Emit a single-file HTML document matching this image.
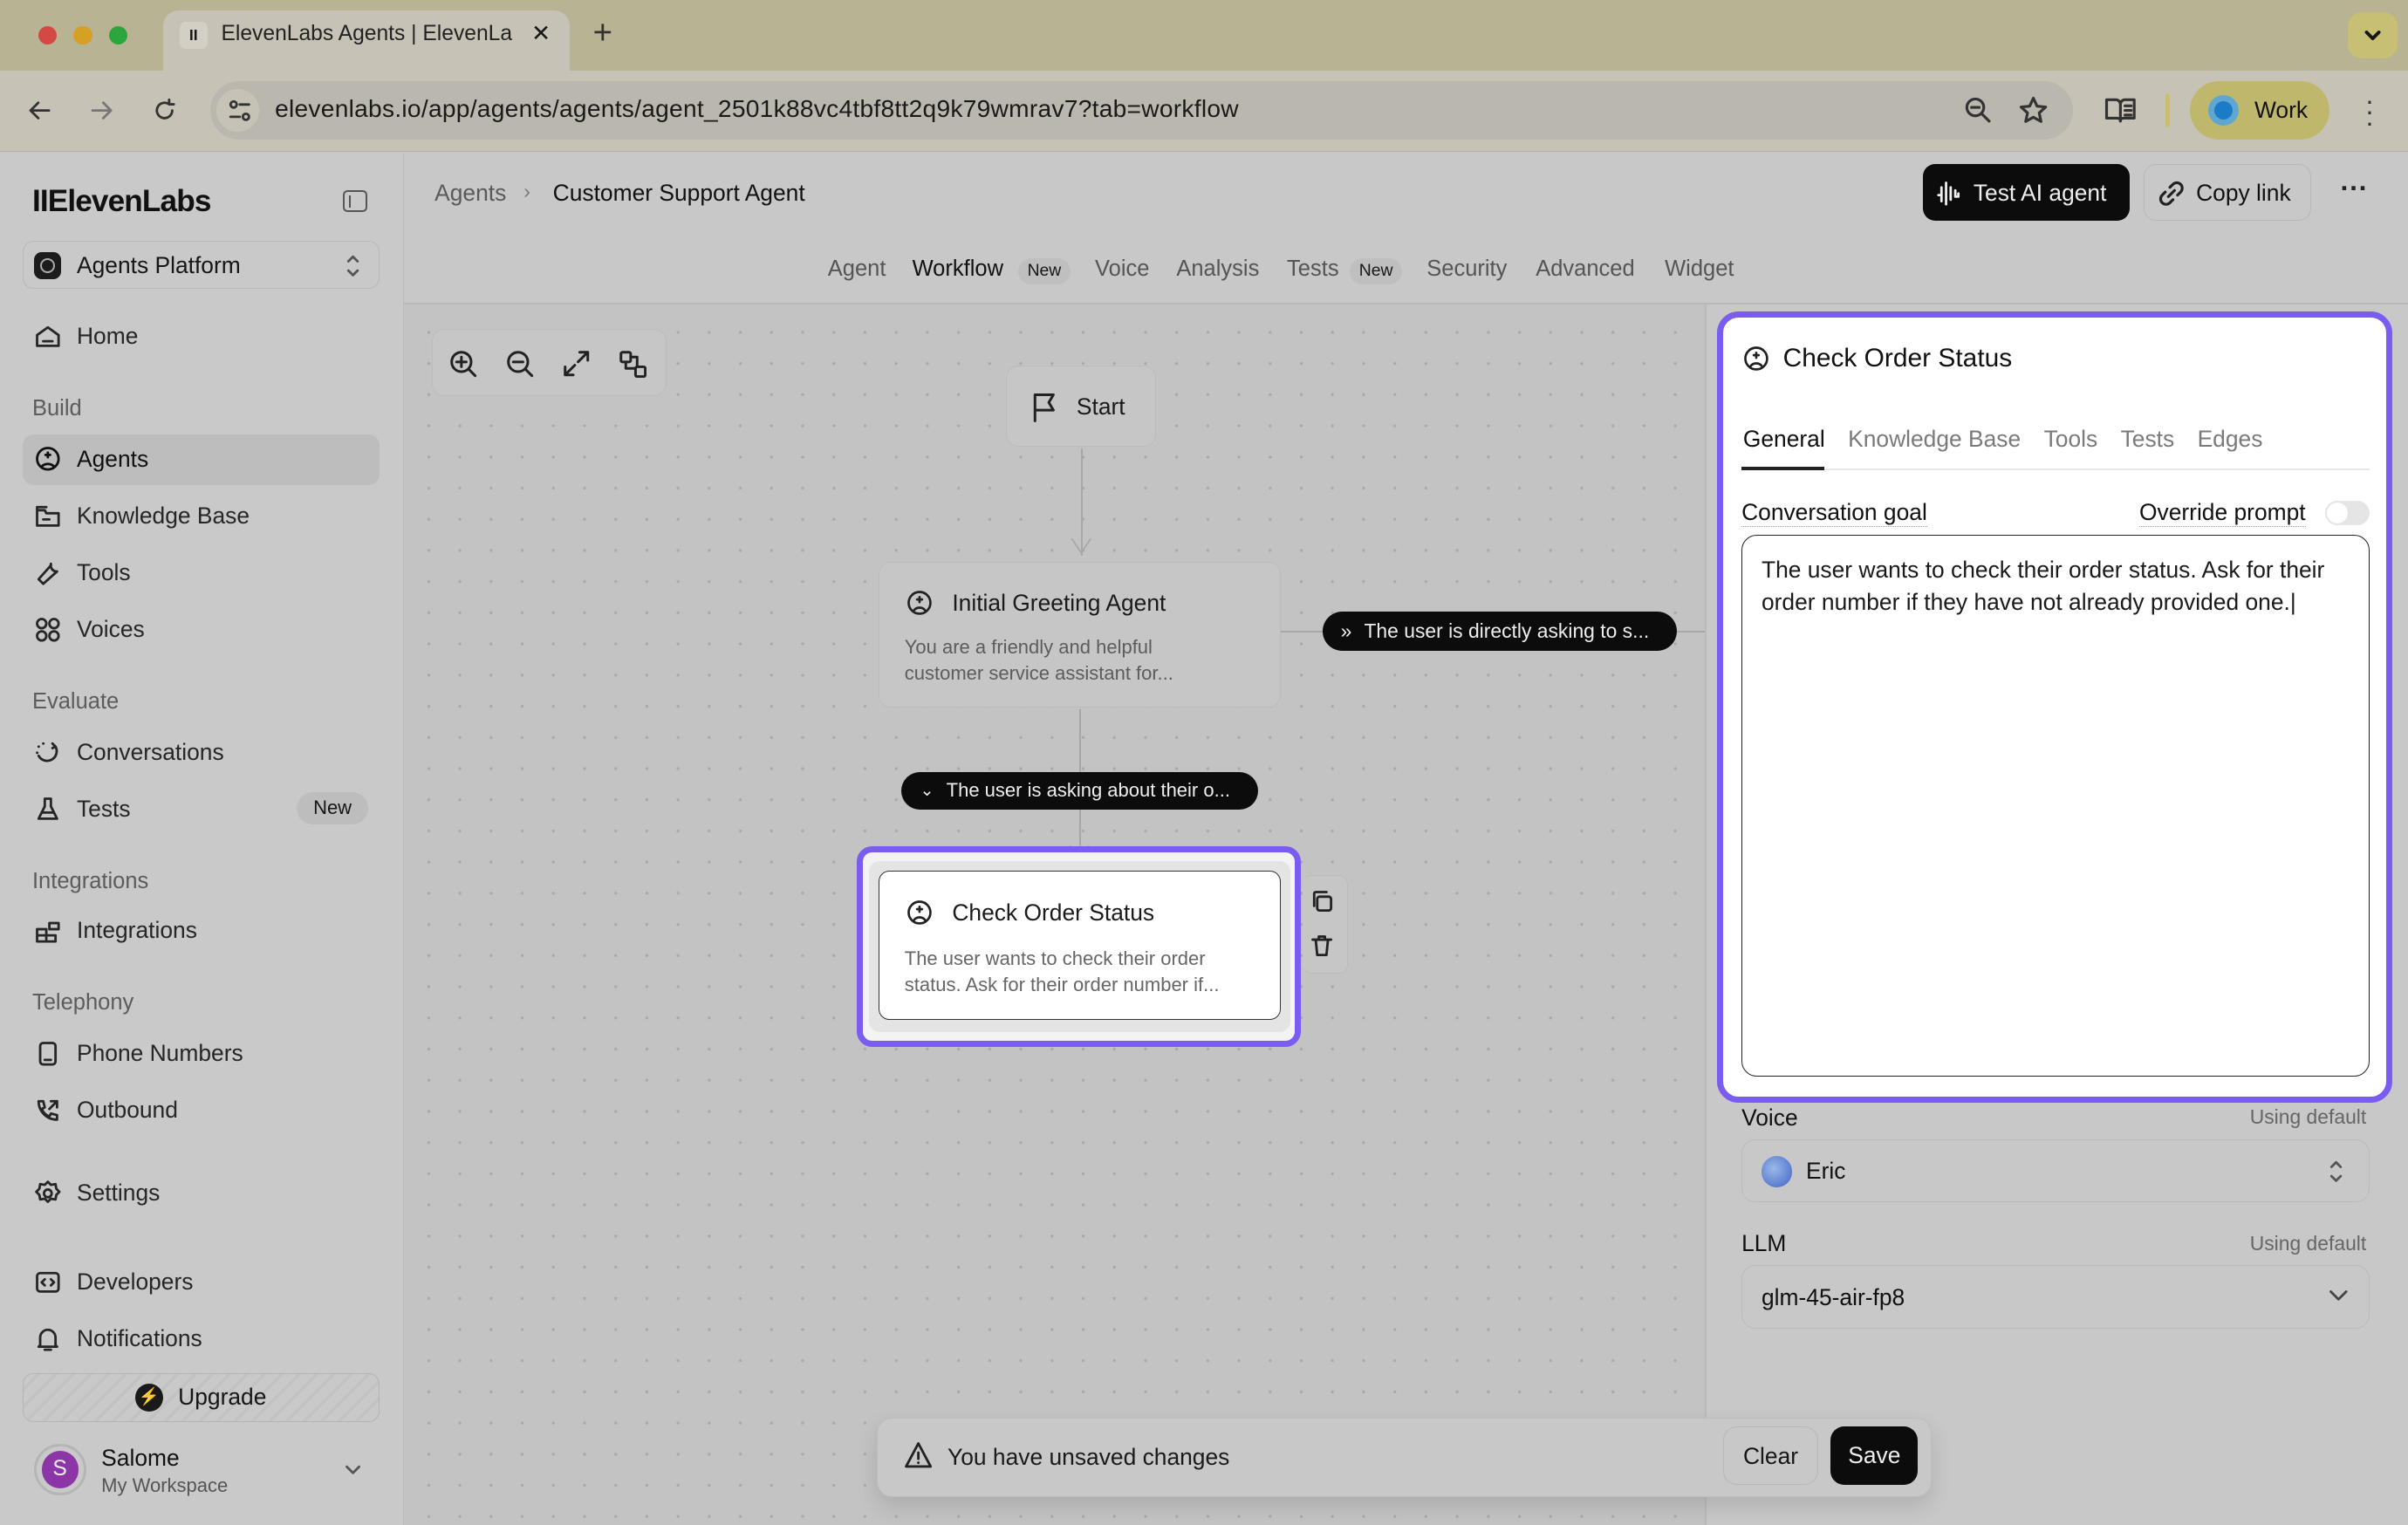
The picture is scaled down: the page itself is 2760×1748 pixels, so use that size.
<!DOCTYPE html>
<html><head><meta charset="utf-8"><style>
*{box-sizing:border-box;margin:0;padding:0}
html,body{width:2760px;height:1748px;overflow:hidden;background:#c8c8c8}
#r{zoom:1.76021;width:1568px;height:993px;position:relative;font-family:"Liberation Sans",sans-serif;color:#161616;background:#c8c8c8;overflow:hidden}
.a{position:absolute;white-space:nowrap}
svg{fill:none;stroke:currentColor;stroke-width:1.6;stroke-linecap:round;stroke-linejoin:round}
.nav{position:absolute;left:22px;font-size:15px;color:#262626;display:flex;align-items:center;gap:10px}
.nav svg{width:18px;height:18px}
.sec{position:absolute;left:21px;font-size:14.5px;color:#5c5c5c}
.tab{position:absolute;top:167px;font-size:14.5px;color:#555}
.nw{position:absolute;top:168px;background:#bfbfbf;border-radius:9px;font-size:11px;padding:2px 6px}
.pill{background:#0c0c0c;color:#eee;border-radius:14px;font-size:13px;display:flex;align-items:center;gap:8px;padding:0 12px;white-space:nowrap;overflow:hidden}
.node{background:#c6c6c6;border:1px solid #bcbcbc;border-radius:8px}
</style></head><body><div id="r">
<!-- title bar -->
<div class="a" style="left:0;top:0;width:1568px;height:46px;background:#b7b393"></div>
<div class="a" style="left:25px;top:17px;width:12px;height:12px;border-radius:50%;background:#d24a43"></div>
<div class="a" style="left:48px;top:17px;width:12px;height:12px;border-radius:50%;background:#d6a024"></div>
<div class="a" style="left:71px;top:17px;width:12px;height:12px;border-radius:50%;background:#2ba63c"></div>
<div class="a" style="left:106px;top:7px;width:265px;height:40px;background:#c6c3b6;border-radius:10px 10px 0 0"></div>
<div class="a" style="left:117px;top:14px;width:18px;height:18px;background:#d2d0c6;border-radius:4px;font-size:10px;text-align:center;line-height:18px;font-weight:bold">II</div>
<div class="a" style="left:144px;top:14px;font-size:14px;color:#222">ElevenLabs Agents | ElevenLa</div>
<div class="a" style="left:346px;top:13px;font-size:15px">✕</div>
<div class="a" style="left:386px;top:9px;font-size:22px;color:#333">+</div>
<div class="a" style="left:1529px;top:8px;width:32px;height:30px;background:#c6bf74;border-radius:9px"></div>
<svg class="a" style="left:1539px;top:17px;width:12px;height:12px;stroke-width:2.2" viewBox="0 0 12 12"><path d="M2 4l4 4 4-4"/></svg>
<!-- toolbar -->
<div class="a" style="left:0;top:46px;width:1568px;height:53px;background:#c6c3b6;border-bottom:1px solid #b3b0a6"></div>
<svg class="a" style="left:16px;top:62px;width:20px;height:20px;stroke:#333" viewBox="0 0 20 20"><path d="M16 10H4M9 5l-5 5 5 5"/></svg>
<svg class="a" style="left:56px;top:62px;width:20px;height:20px;stroke:#777" viewBox="0 0 20 20"><path d="M4 10h12M11 5l5 5-5 5"/></svg>
<svg class="a" style="left:97px;top:62px;width:20px;height:20px;stroke:#333" viewBox="0 0 20 20"><path d="M15 10a5 5 0 1 1-2-4M13 3v3h3"/></svg>
<div class="a" style="left:137px;top:53px;width:1213px;height:38px;background:#b9b7ae;border-radius:19px"></div>
<div class="a" style="left:141px;top:58px;width:28px;height:28px;background:#c6c3b6;border-radius:50%"></div>
<svg class="a" style="left:147px;top:63px;width:18px;height:18px;stroke:#333" viewBox="0 0 18 18"><circle cx="5" cy="5" r="2"/><path d="M9 5h6M3 13h6"/><circle cx="13" cy="13" r="2"/></svg>
<div class="a" style="left:179px;top:62px;font-size:16px;color:#1a1a1a;letter-spacing:0.15px">elevenlabs.io/app/agents/agents/agent_2501k88vc4tbf8tt2q9k79wmrav7?tab=workflow</div>
<svg class="a" style="left:1278px;top:62px;width:20px;height:20px;stroke:#333;stroke-width:1.8" viewBox="0 0 20 20"><circle cx="8" cy="8" r="5.5"/><path d="M5.5 8h5M12 12l5 5"/></svg>
<svg class="a" style="left:1314px;top:62px;width:20px;height:20px;stroke:#333;stroke-width:1.8" viewBox="0 0 20 20"><path d="M10 2l2.4 5.2 5.6.6-4.2 3.8 1.2 5.6L10 14.4 5 17.2l1.2-5.6L2 7.8l5.6-.6z"/></svg>
<svg class="a" style="left:1370px;top:62px;width:22px;height:20px;stroke:#333;stroke-width:1.8" viewBox="0 0 22 20"><path d="M2 3h6a3 3 0 0 1 3 3v11a2 2 0 0 0-2-2H2zM20 3h-6a3 3 0 0 0-3 3v11a2 2 0 0 1 2-2h7zM14 7h4M14 10h4M14 13h4"/></svg>
<div class="a" style="left:1410px;top:61px;width:3px;height:22px;background:#c6bf74;border-radius:2px"></div>
<div class="a" style="left:1426px;top:53px;width:91px;height:38px;background:#bfb76c;border-radius:19px"></div>
<div class="a" style="left:1438px;top:62px;width:20px;height:20px;border-radius:50%;background:#5fa7d0"></div>
<div class="a" style="left:1442px;top:66px;width:12px;height:12px;border-radius:50%;background:#1a7cc6"></div>
<div class="a" style="left:1468px;top:63px;font-size:15px;color:#111">Work</div>
<div class="a" style="left:1540px;top:62px;font-size:18px;line-height:7px;color:#333;width:4px;white-space:normal">·<br>·<br>·</div>
<!-- sidebar -->
<div class="a" style="left:0;top:100px;width:263px;height:893px;background:#c9c9c9;border-right:1px solid #bbb"></div>
<div class="a" style="left:21px;top:120px;font-size:20px;font-weight:bold;letter-spacing:-0.5px;color:#111">IIElevenLabs</div>
<div class="a" style="left:223px;top:124px;width:16px;height:14px;border:1.6px solid #555;border-radius:3px"></div>
<div class="a" style="left:227px;top:127px;width:1.6px;height:8px;background:#555"></div>
<div class="a" style="left:15px;top:157px;width:232px;height:31px;border:1px solid #b8b8b8;border-radius:7px"></div>
<div class="a" style="left:22px;top:164px;width:18px;height:18px;border-radius:5px;background:#1c1c1c"></div>
<div class="a" style="left:26px;top:168px;width:10px;height:10px;border-radius:50%;border:1.5px solid #aaa"></div>
<div class="a" style="left:50px;top:164px;font-size:15px;color:#161616">Agents Platform</div>
<svg class="a" style="left:224px;top:164px;width:12px;height:18px;stroke:#555" viewBox="0 0 12 18"><path d="M3 6l3-3 3 3M3 12l3 3 3-3"/></svg>
<div class="nav" style="top:210px"><svg viewBox="0 0 18 18"><path d="M2 8l7-5 7 5v7H2zM6 12h6"/></svg>Home</div>
<div class="sec" style="top:258px">Build</div>
<div class="a" style="left:15px;top:283px;width:232px;height:33px;background:#bdbdbd;border-radius:7px"></div>
<div class="nav" style="top:290px;color:#111"><svg viewBox="0 0 18 18"><circle cx="9" cy="9" r="7"/><path d="M5 14a5 4 0 0 1 8 0M9 5v3M7.5 6.5h3"/></svg>Agents</div>
<div class="nav" style="top:327px"><svg viewBox="0 0 18 18"><path d="M2 5h5l1 2h8v8H2zM2 5V3h6M6 11h4"/></svg>Knowledge Base</div>
<div class="nav" style="top:364px"><svg viewBox="0 0 18 18"><path d="M11 3a4 4 0 0 0 4 5l-9 8-3-3 8-9"/></svg>Tools</div>
<div class="nav" style="top:401px"><svg viewBox="0 0 18 18"><circle cx="5" cy="5" r="3"/><circle cx="13" cy="5" r="3"/><circle cx="5" cy="13" r="3"/><circle cx="13" cy="13" r="3"/></svg>Voices</div>
<div class="sec" style="top:449px">Evaluate</div>
<div class="nav" style="top:481px"><svg viewBox="0 0 18 18"><path d="M2 9h.1M3 5h.1M6 3h.1M12 3l2 2-2 1M14 5a6 6 0 1 1-11 6"/></svg>Conversations</div>
<div class="nav" style="top:518px"><svg viewBox="0 0 18 18"><path d="M7 2h4M7 2v5L3 15h12l-4-8V2M5 11h8"/></svg>Tests</div>
<div class="a" style="left:193px;top:516px;width:47px;height:21px;background:#bdbdbd;border-radius:11px;font-size:12.5px;text-align:center;line-height:21px">New</div>
<div class="sec" style="top:566px">Integrations</div>
<div class="nav" style="top:597px"><svg viewBox="0 0 18 18"><path d="M2 8h6v8H2zM8 12h6v4H8zM2 12h6M10 4h6v4h-6z"/></svg>Integrations</div>
<div class="sec" style="top:645px">Telephony</div>
<div class="nav" style="top:677px"><svg viewBox="0 0 18 18"><rect x="4" y="2" width="10" height="14" rx="2"/><path d="M7 13h4"/></svg>Phone Numbers</div>
<div class="nav" style="top:714px"><svg viewBox="0 0 18 18"><path d="M3 3l3 0 1 4-2 1a9 9 0 0 0 5 5l1-2 4 1v3a12 12 0 0 1-12-12M11 3h4v4M15 3l-5 5"/></svg>Outbound</div>
<div class="nav" style="top:768px"><svg viewBox="0 0 18 18"><circle cx="9" cy="9" r="2.5"/><path d="M9 1.5l2 2 3-.5.5 3 2 2-2 2-.5 3-3-.5-2 2-2-2-3 .5-.5-3-2-2 2-2 .5-3 3 .5z"/></svg>Settings</div>
<div class="nav" style="top:826px"><svg viewBox="0 0 18 18"><rect x="2" y="3" width="14" height="12" rx="2"/><path d="M7 7l-2 2 2 2M11 7l2 2-2 2"/></svg>Developers</div>
<div class="nav" style="top:863px"><svg viewBox="0 0 18 18"><path d="M4 13V8a5 5 0 0 1 10 0v5l1 1H3zM7 16h4"/></svg>Notifications</div>
<div class="a" style="left:15px;top:894px;width:232px;height:32px;border:1px solid #b5b5b5;border-radius:7px;background:repeating-linear-gradient(135deg,#c9c9c9 0 6px,#c2c2c2 6px 8px)"></div>
<div class="a" style="left:88px;top:901px;width:18px;height:18px;border-radius:50%;background:#1a1a1a;color:#ddd;font-size:11px;text-align:center;line-height:18px">⚡</div>
<div class="a" style="left:116px;top:901px;font-size:15px;color:#161616">Upgrade</div>
<div class="a" style="left:22px;top:940px;width:34px;height:34px;border-radius:50%;border:2px solid #b5b5b5"></div>
<div class="a" style="left:27px;top:945px;width:24px;height:24px;border-radius:50%;background:#8c35a6;color:#eee;font-size:14px;text-align:center;line-height:24px">S</div>
<div class="a" style="left:66px;top:941px;font-size:15px;color:#111">Salome</div>
<div class="a" style="left:66px;top:960px;font-size:12.5px;color:#555">My Workspace</div>
<svg class="a" style="left:224px;top:952px;width:12px;height:10px;stroke:#555" viewBox="0 0 12 10"><path d="M2 3l4 4 4-4"/></svg>
<!-- header -->
<div class="a" style="left:283px;top:117px;font-size:15px;color:#5a5a5a">Agents</div>
<div class="a" style="left:341px;top:117px;font-size:13px;color:#777">›</div>
<div class="a" style="left:360px;top:117px;font-size:15px;color:#111">Customer Support Agent</div>
<div class="a" style="left:1252px;top:107px;width:135px;height:37px;background:#0c0c0c;border-radius:8px"></div>
<svg class="a" style="left:1261px;top:117px;width:18px;height:18px;stroke:#eee" viewBox="0 0 18 18"><path d="M1 10h2V5M3 5v9M6 2v14M9 5v8M12 7v4h2V9"/></svg>
<div class="a" style="left:1285px;top:117px;font-size:15px;color:#eee">Test AI agent</div>
<div class="a" style="left:1396px;top:107px;width:109px;height:37px;border:1px solid #b8b8b8;border-radius:8px"></div>
<svg class="a" style="left:1405px;top:117px;width:18px;height:18px;stroke:#222;stroke-width:1.8" viewBox="0 0 18 18"><path d="M8 5l2-2a3 3 0 0 1 5 5l-2 2M10 13l-2 2a3 3 0 0 1-5-5l2-2M7 11l4-4"/></svg>
<div class="a" style="left:1430px;top:117px;font-size:15px;color:#111">Copy link</div>
<div class="a" style="left:1524px;top:112px;font-size:18px;font-weight:bold;color:#222">···</div>
<span class="tab" style="left:539px">Agent</span>
<span class="tab" style="left:594px;color:#111">Workflow</span>
<span class="nw" style="left:663px">New</span>
<span class="tab" style="left:713px">Voice</span>
<span class="tab" style="left:766px">Analysis</span>
<span class="tab" style="left:838px">Tests</span>
<span class="nw" style="left:879px">New</span>
<span class="tab" style="left:929px">Security</span>
<span class="tab" style="left:1000px">Advanced</span>
<span class="tab" style="left:1084px">Widget</span>
<div class="a" style="left:263px;top:197px;width:1305px;height:1px;background:#b8b8b8"></div>
<!-- canvas -->
<div class="a" style="left:263px;top:198px;width:847px;height:795px;background-color:#c3c3c3;background-image:radial-gradient(circle,#a9a9a9 0.8px,transparent 1.1px);background-size:20.3px 20.3px;background-position:6px 8px"></div>
<div class="a" style="left:1110px;top:198px;width:1px;height:795px;background:#bababa"></div>
<div class="a node" style="left:281px;top:214px;width:153px;height:44px;background:#c6c6c6"></div>
<svg class="a" style="left:292px;top:227px;width:19px;height:19px;stroke:#222" viewBox="0 0 18 18"><circle cx="8" cy="8" r="6"/><path d="M5 8h6M8 5v6M12.5 12.5l4 4"/></svg>
<svg class="a" style="left:329px;top:227px;width:19px;height:19px;stroke:#222" viewBox="0 0 18 18"><circle cx="8" cy="8" r="6"/><path d="M5 8h6M12.5 12.5l4 4"/></svg>
<svg class="a" style="left:366px;top:227px;width:19px;height:19px;stroke:#222" viewBox="0 0 18 18"><path d="M11 2h5v5M16 2l-6 6M7 16H2v-5M2 16l6-6"/></svg>
<svg class="a" style="left:402px;top:227px;width:19px;height:19px;stroke:#222" viewBox="0 0 18 18"><rect x="2" y="2" width="6" height="6" rx="1"/><rect x="11" y="11" width="6" height="6" rx="1"/><path d="M5 8v4h6M8 5h4v6"/></svg>
<!-- edges -->
<div class="a" style="left:704px;top:292px;width:1px;height:70px;background:#a8a8a8"></div>
<svg class="a" style="left:697px;top:350px;width:14px;height:12px;stroke:#a8a8a8;stroke-width:1" viewBox="0 0 14 12"><path d="M1 1l6 9 6-9"/></svg>
<div class="a" style="left:703px;top:462px;width:1px;height:100px;background:#a8a8a8"></div>
<svg class="a" style="left:696px;top:550px;width:14px;height:12px;stroke:#aaa;stroke-width:1" viewBox="0 0 14 12"><path d="M1 1l6 9 6-9"/></svg>
<div class="a" style="left:834px;top:411px;width:28px;height:1px;background:#a8a8a8"></div>
<div class="a" style="left:1092px;top:411px;width:18px;height:1px;background:#a8a8a8"></div>
<div class="a node" style="left:655px;top:238px;width:98px;height:53px"></div>
<svg class="a" style="left:671px;top:255px;width:18px;height:20px;stroke:#222;stroke-width:1.7" viewBox="0 0 18 20"><path d="M3 19V2h12l-3 5 3 5H3"/></svg>
<div class="a" style="left:701px;top:256px;font-size:15px;color:#1a1a1a">Start</div>
<div class="a node" style="left:572px;top:366px;width:262px;height:95px"></div>
<svg class="a" style="left:590px;top:384px;width:17px;height:17px;stroke:#222" viewBox="0 0 18 18"><circle cx="9" cy="9" r="7.5"/><path d="M5 14.5a4.5 4 0 0 1 8 0M9 5v3.5M7.3 6.7h3.4"/></svg>
<div class="a" style="left:620px;top:384px;font-size:15px;color:#1a1a1a">Initial Greeting Agent</div>
<div class="a" style="left:589px;top:413px;font-size:12.5px;line-height:17px;color:#5c5c5c">You are a friendly and helpful<br>customer service assistant for...</div>
<div class="a pill" style="left:861px;top:398px;width:231px;height:26px"><span style="font-size:13px">»</span>The user is directly asking to s...</div>
<div class="a pill" style="left:587px;top:503px;width:232px;height:24px;font-size:12.5px"><span style="font-size:11px">⌄</span>The user is asking about their o...</div>
<!-- selected node -->
<div class="a" style="left:558px;top:551px;width:289px;height:131px;border:4px solid #7b5cf0;border-radius:10px;background:#f3f3f3"></div>
<div class="a" style="left:566px;top:561px;width:274px;height:111px;background:#e4e4e4;border-radius:7px"></div>
<div class="a" style="left:572px;top:567px;width:262px;height:97px;background:#fff;border:1px solid #333;border-radius:7px"></div>
<svg class="a" style="left:590px;top:586px;width:17px;height:17px;stroke:#222" viewBox="0 0 18 18"><circle cx="9" cy="9" r="7.5"/><path d="M5 14.5a4.5 4 0 0 1 8 0M9 5v3.5M7.3 6.7h3.4"/></svg>
<div class="a" style="left:620px;top:586px;font-size:15px;color:#1a1a1a">Check Order Status</div>
<div class="a" style="left:589px;top:616px;font-size:12.5px;line-height:17px;color:#666">The user wants to check their order<br>status. Ask for their order number if...</div>
<div class="a" style="left:848px;top:570px;width:30px;height:64px;border:1px solid #bbb;border-radius:6px;background:#c6c6c6;border-left:none"></div>
<svg class="a" style="left:853px;top:579px;width:16px;height:16px;stroke:#222" viewBox="0 0 16 16"><rect x="5" y="5" width="9" height="9" rx="1.5"/><path d="M3 11V3a1 1 0 0 1 1-1h7"/></svg>
<svg class="a" style="left:853px;top:608px;width:16px;height:16px;stroke:#222" viewBox="0 0 16 16"><path d="M2 4h12M6 4V2h4v2M4 4l1 10h6l1-10"/></svg>
<!-- unsaved bar -->
<div class="a" style="left:571px;top:923px;width:687px;height:52px;background:#c8c8c8;border:1px solid #bdbdbd;border-radius:10px;box-shadow:0 6px 14px rgba(0,0,0,0.12)"></div>
<svg class="a" style="left:588px;top:938px;width:20px;height:19px;stroke:#222;stroke-width:1.6" viewBox="0 0 20 19"><path d="M10 2L2 17h16zM10 8v4M10 14.5v.1"/></svg>
<div class="a" style="left:617px;top:940px;font-size:15px;color:#1a1a1a">You have unsaved changes</div>
<div class="a" style="left:1122px;top:929px;width:62px;height:38px;border:1px solid #b8b8b8;border-radius:9px;font-size:15px;text-align:center;line-height:38px">Clear</div>
<div class="a" style="left:1192px;top:929px;width:57px;height:38px;background:#0c0c0c;color:#eee;border-radius:9px;font-size:15px;text-align:center;line-height:38px">Save</div>
<!-- right panel -->
<div class="a" style="left:1118px;top:203px;width:440px;height:515px;border:4px solid #7b5cf0;border-radius:14px;background:#fff"></div>
<svg class="a" style="left:1135px;top:225px;width:17px;height:17px;stroke:#222" viewBox="0 0 18 18"><circle cx="9" cy="9" r="7.5"/><path d="M5 14.5a4.5 4 0 0 1 8 0M9 5v3.5M7.3 6.7h3.4"/></svg>
<div class="a" style="left:1161px;top:224px;font-size:17px;color:#111">Check Order Status</div>
<div class="a" style="left:1135px;top:277px;display:flex;gap:15px;font-size:15px;color:#7a7a7a"><span style="color:#111">General</span><span>Knowledge Base</span><span>Tools</span><span>Tests</span><span>Edges</span></div>
<div class="a" style="left:1134px;top:305px;width:409px;height:1px;background:#e8e8e8"></div>
<div class="a" style="left:1134px;top:304px;width:54px;height:2px;background:#222"></div>
<div class="a" style="left:1134px;top:325px;font-size:15px;color:#111;border-bottom:1px dotted #999">Conversation goal</div>
<div class="a" style="left:1393px;top:325px;font-size:15px;color:#111;border-bottom:1px dotted #999">Override prompt</div>
<div class="a" style="left:1514px;top:326px;width:29px;height:16px;border-radius:8px;background:#e5e5e5"></div>
<div class="a" style="left:1515px;top:327px;width:14px;height:14px;border-radius:50%;background:#fff"></div>
<div class="a" style="left:1134px;top:348px;width:409px;height:353px;border:1px solid #222;border-radius:10px"></div>
<div class="a" style="left:1147px;top:361px;width:385px;font-size:15px;line-height:21px;color:#1a1a1a;white-space:normal">The user wants to check their order status. Ask for their order number if they have not already provided one.|</div>
<div class="a" style="left:1134px;top:719px;font-size:15px;color:#111">Voice</div>
<div class="a" style="left:1465px;top:720px;font-size:13px;color:#666">Using default</div>
<div class="a" style="left:1134px;top:742px;width:409px;height:41px;border:1px solid #bbb;border-radius:9px"></div>
<div class="a" style="left:1147px;top:753px;width:20px;height:20px;border-radius:50%;background:radial-gradient(circle at 40% 40%,#9bb8e8,#3e63c7)"></div>
<div class="a" style="left:1176px;top:754px;font-size:15px;color:#111">Eric</div>
<svg class="a" style="left:1515px;top:754px;width:12px;height:18px;stroke:#555" viewBox="0 0 12 18"><path d="M3 6l3-3 3 3M3 12l3 3 3-3"/></svg>
<div class="a" style="left:1134px;top:801px;font-size:15px;color:#111">LLM</div>
<div class="a" style="left:1465px;top:802px;font-size:13px;color:#666">Using default</div>
<div class="a" style="left:1134px;top:824px;width:409px;height:41px;border:1px solid #bbb;border-radius:9px"></div>
<div class="a" style="left:1147px;top:836px;font-size:15px;color:#111">glm-45-air-fp8</div>
<svg class="a" style="left:1516px;top:839px;width:14px;height:10px;stroke:#444" viewBox="0 0 14 10"><path d="M2 2l5 5 5-5"/></svg>
</div></body></html>
